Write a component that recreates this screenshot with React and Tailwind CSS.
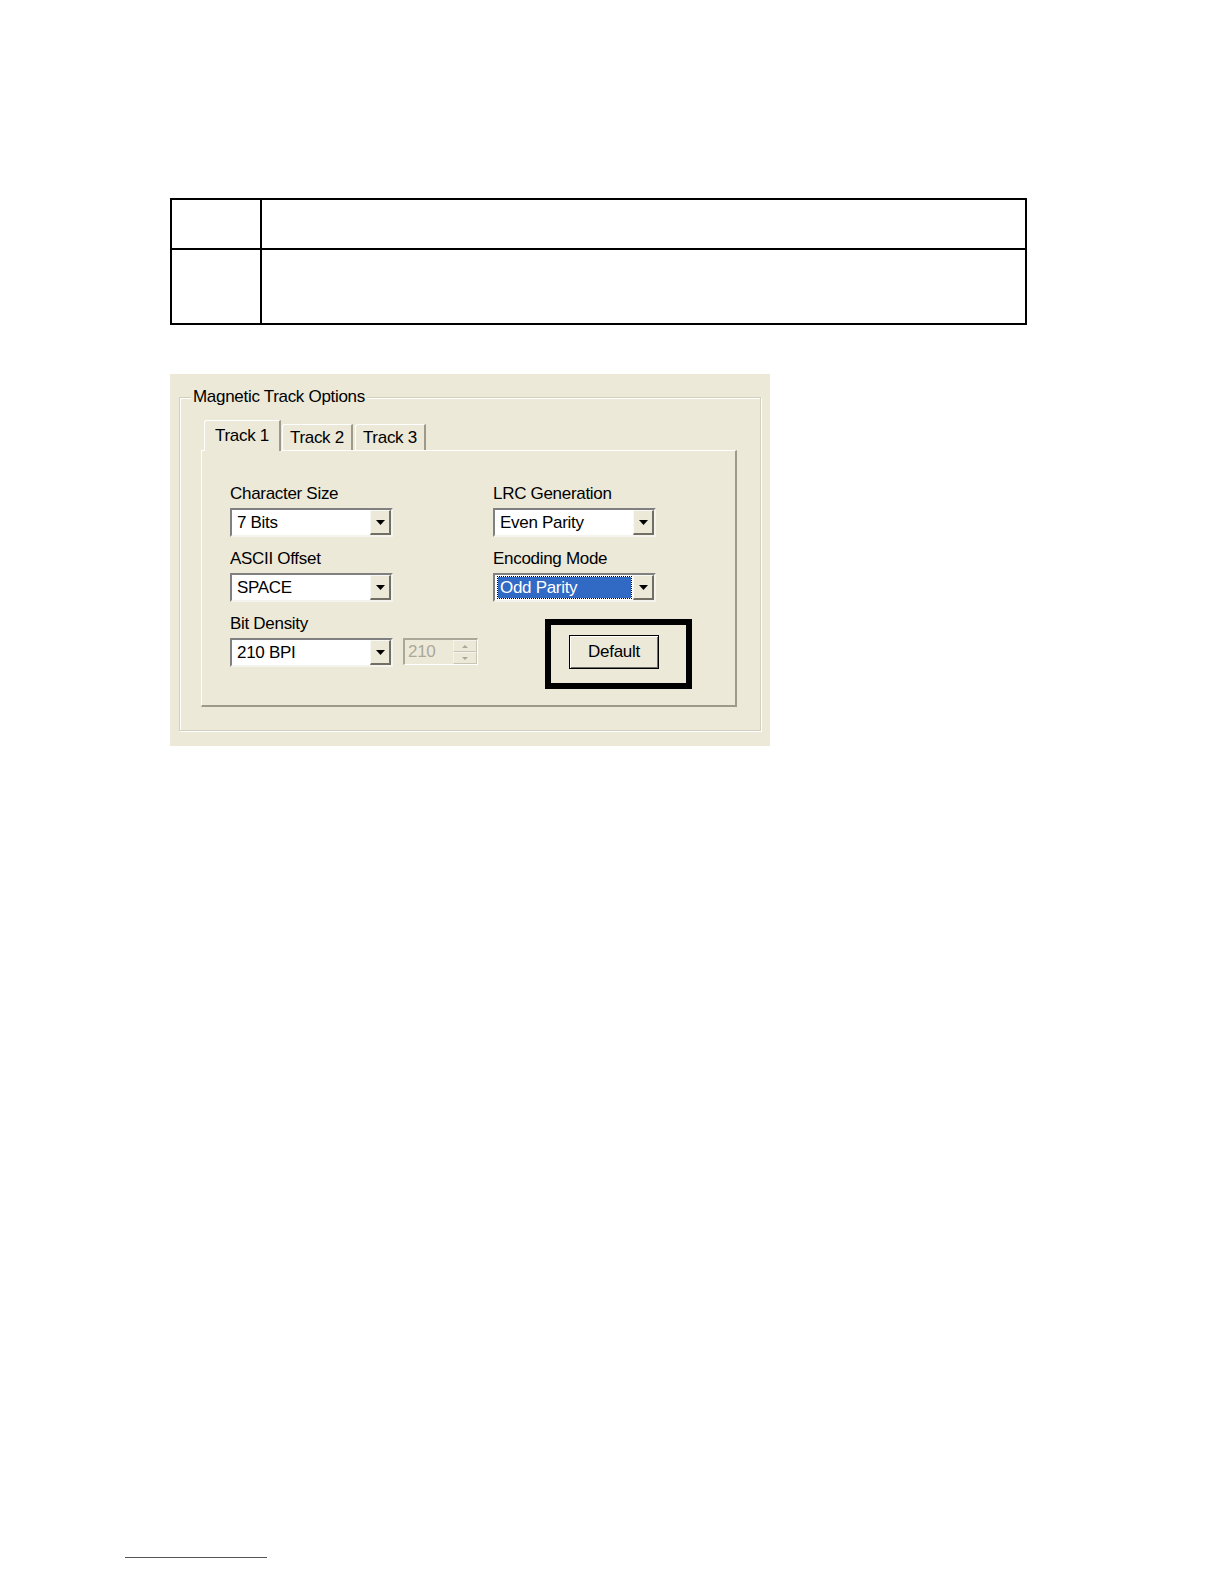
import React from 'react';

function Arrow() {
    return (
        <svg width="9" height="5" viewBox="0 0 9 5">
            <path d="M0 0 H9 L4.5 5 Z" fill="#000" />
        </svg>
    );
}

function Combo({ value, selected }) {
    return (
        <div className="flex h-[29px] w-[163px] border-t-2 border-l-2 border-t-[#808080] border-l-[#808080] border-b-2 border-r-2 border-b-[#f4f3ee] border-r-[#f4f3ee] bg-white">
            <div className="flex-1 flex items-center pl-[3px] pr-[2px]">
                {selected ? (
                    <span className="flex-1 h-[21px] flex items-center bg-[#316ac5] text-white outline outline-1 outline-dotted outline-black pl-[2px]">{value}</span>
                ) : (
                    <span className="pl-[2px]">{value}</span>
                )}
            </div>
            <div className="w-[21px] h-[25px] bg-[#ece9d8] border-t border-l border-t-[#f8f8f4] border-l-[#f8f8f4] border-b-2 border-r-2 border-b-[#716f64] border-r-[#716f64] flex items-center justify-center">
                <Arrow />
            </div>
        </div>
    );
}

function Field({ label, children }) {
    return (
        <div className="flex flex-col">
            <div className="h-[20px] leading-[20px] mb-[4px]">{label}</div>
            {children}
        </div>
    );
}

function Tab({ label, active }) {
    return (
        <div className={`${active ? 'h-[31px] px-[10px] -mr-[1px] z-10' : 'h-[26px] px-[7px] mb-[1px]'} flex items-center bg-[#ece9d8] border-t border-l border-white border-r-2 border-r-[#9d9a8c] rounded-tl-[3px]`}>
            {label}
        </div>
    );
}

export default function App() {
    return (
        <div className="w-[1224px] h-[1584px] bg-white relative" style={{ fontFamily: '"Liberation Sans", Arial, sans-serif' }}>
            <div className="pt-[198px] pl-[170px]">
                <table className="w-[857px] border-collapse">
                    <tbody>
                        <tr className="h-[50px]">
                            <td className="w-[90px] border-2 border-black"></td>
                            <td className="border-2 border-black"></td>
                        </tr>
                        <tr className="h-[75px]">
                            <td className="border-2 border-black"></td>
                            <td className="border-2 border-black"></td>
                        </tr>
                    </tbody>
                </table>

                <div className="mt-[49px] w-[600px] h-[372px] bg-[#ece9d8] pt-[23px] pl-[9px] text-[17px] text-black tracking-[-0.3px]">
                    <div className="relative w-[582px] h-[334px] border border-[#d0d0bf] shadow-[inset_1px_1px_0_#fff,1px_1px_0_#fff]">
                        <div className="absolute -top-[12px] left-[11px] bg-[#ece9d8] px-[2px] leading-[22px]">Magnetic Track Options</div>

                        <div className="pt-[22px] pl-[21px]">
                            <div className="flex items-end gap-[2px] pl-[3px] h-[31px] relative z-10 -mb-[1px]">
                                <Tab label="Track 1" active />
                                <Tab label="Track 2" />
                                <Tab label="Track 3" />
                            </div>
                            <div className="w-[536px] h-[257px] border-t border-l border-white border-b-2 border-r-2 border-b-[#9d9a8c] border-r-[#9d9a8c] bg-[#ece9d8] pt-[33px] pl-[28px]">
                                <div className="flex">
                                    <div className="w-[263px] flex flex-col gap-[12px]">
                                        <Field label="Character Size"><Combo value="7 Bits" /></Field>
                                        <Field label="ASCII Offset"><Combo value="SPACE" /></Field>
                                        <Field label="Bit Density">
                                            <div className="flex gap-[10px]">
                                                <Combo value="210 BPI" />
                                                <div className="flex h-[27px] w-[75px] border-t-2 border-l-2 border-t-[#aca899] border-l-[#aca899] border-b border-r border-b-white border-r-white bg-[#ece9d8]">
                                                    <div className="flex-1 flex items-center pl-[3px] text-[#aca899]">210</div>
                                                    <div className="w-[24px] flex flex-col">
                                                        <div className="flex-1 flex items-center justify-center border border-[#f4f3ee] border-b-[#c8c5b6] border-r-[#c8c5b6]">
                                                            <svg width="6" height="3" viewBox="0 0 6 3"><path d="M0 3 H6 L3 0 Z" fill="#aca899" /></svg>
                                                        </div>
                                                        <div className="flex-1 flex items-center justify-center border border-[#f4f3ee] border-b-[#c8c5b6] border-r-[#c8c5b6]">
                                                            <svg width="6" height="3" viewBox="0 0 6 3"><path d="M0 0 H6 L3 3 Z" fill="#aca899" /></svg>
                                                        </div>
                                                    </div>
                                                </div>
                                            </div>
                                        </Field>
                                    </div>
                                    <div className="flex flex-col gap-[12px]">
                                        <Field label="LRC Generation"><Combo value="Even Parity" /></Field>
                                        <Field label="Encoding Mode"><Combo value="Odd Parity" selected /></Field>
                                        <div className="pl-[52px] pt-[5px]">
                                            <div className="w-[147px] h-[70px] border-[6px] border-black pl-[18px] pt-[10px]">
                                                <div className="w-[90px] h-[34px] border border-black bg-[#ece9d8] flex items-center justify-center shadow-[inset_1px_1px_0_#fff,inset_-1px_-1px_0_#716f64]">
                                                    Default
                                                </div>
                                            </div>
                                        </div>
                                    </div>
                                </div>
                            </div>
                        </div>
                    </div>
                </div>
            </div>
            <div className="absolute left-[125px] top-[1557px] w-[142px] h-[1px] bg-[#555]"></div>
        </div>
    );
}
